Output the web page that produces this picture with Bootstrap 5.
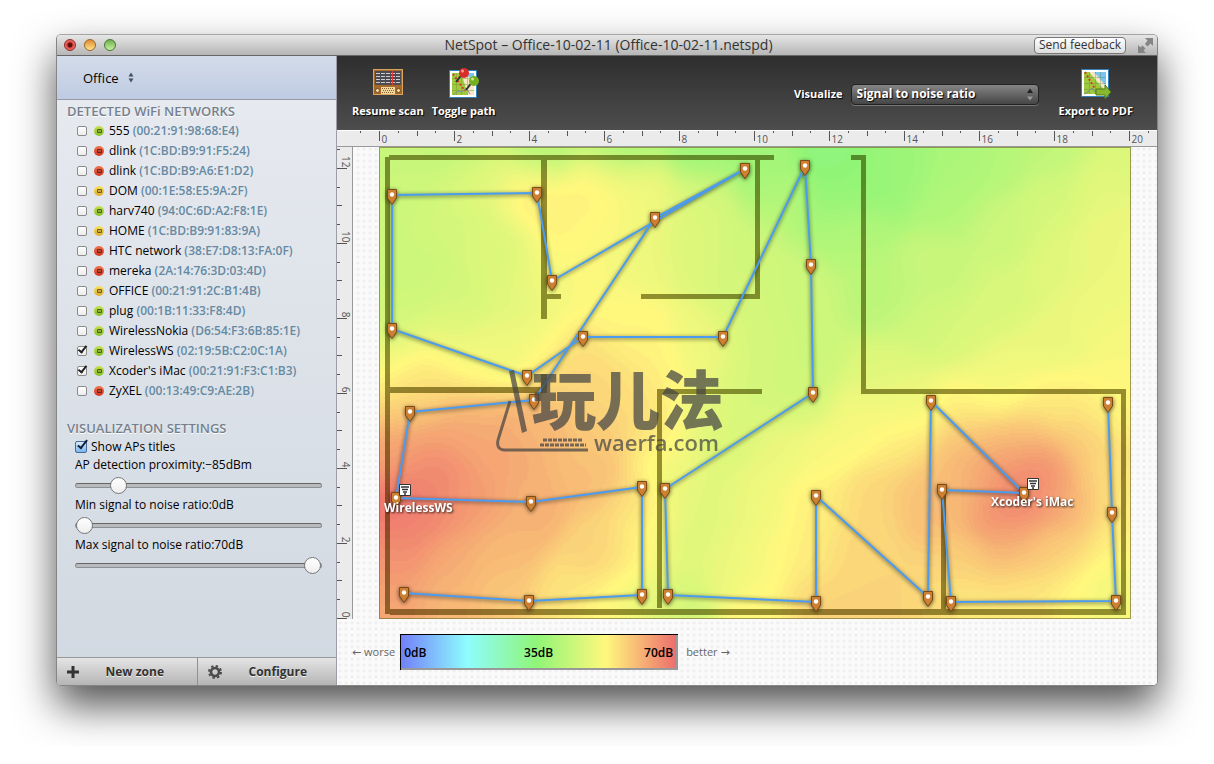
<!DOCTYPE html>
<html lang="en">
<head>
<meta charset="utf-8">
<meta name="viewport" content="width=device-width, initial-scale=1">
<title>NetSpot - Office-10-02-11</title>
<link href="https://cdn.jsdelivr.net/npm/bootstrap@5.3.0/dist/css/bootstrap.min.css" rel="stylesheet">
<style>
body{font-family:"Open Sans","Noto Sans",sans-serif;font-size:12px;line-height:20px;color:#000;background:#fff;padding:34px 56px 60px}
button,select,input{font:inherit}
.app-window{border:1px solid #858585;border-top-color:#a5a5a5;border-radius:5px;overflow:hidden;background:#fafafa;box-shadow:0 20px 40px rgba(0,0,0,.68)}
.title-bar{height:21px;background:linear-gradient(#e6e6e6,#b6b6b6);border-bottom:1px solid #666;padding:0 4px 0 7px;color:#333}
.title-side{flex:1}
.light{width:12px;height:12px;border-radius:50%;border:1px solid #555}
.light.red{background:radial-gradient(circle at 50% 50%,#5e0d0d 0 2px,#e04944 3px,#f4938a);border-color:#8c2b2b}
.light.amber{background:linear-gradient(#e08b2f,#ffe58b);border-color:#98672a}
.light.lime{background:linear-gradient(#6fae4c,#c6f2a0);border-color:#49763a}
.win-title{font-size:14px}
.feedback{height:17px;line-height:14px;padding:0 4px;border:1px solid #777;border-radius:4px;background:linear-gradient(#fff,#ddd);color:#333}
.side{width:280px;background:linear-gradient(#e8ebf0,#d0d8e1);border-right:1px solid #9b9fa5}
.zone-head{height:44px;background:linear-gradient(#d4dce9,#becbe3);border-bottom:1px solid #959ba5;padding-left:26px}
.zone-head button,.plain{background:none;border:0;padding:0}
.zone-head button{font-size:13px}
.side-label{font-size:13px;font-weight:600;color:#75808d;line-height:20px;margin:0 0 0 10px;padding-top:1px;text-shadow:0 1px #fff}
.net-list{margin-bottom:16px}
.net-row{height:20px;margin-left:20px;white-space:nowrap}
.net-row label{font-size:12px}
.mac{font-size:12px;font-weight:600;color:#668aa3}
.tick{appearance:none;width:10px;height:10px;border:1px solid #8b8b8b;border-radius:2px;background:linear-gradient(#fff,#ececec);margin:0;flex:none;position:relative}
.tick:checked::after{content:"";position:absolute;left:2px;top:-3px;width:5px;height:9px;border:solid #222;border-width:0 2px 2px 0;transform:rotate(38deg)}
.tick.blue{width:12px;height:12px;background:linear-gradient(#d9ecfc,#78b5ee);border-color:#49679b}
.tick.blue:checked::after{left:4px;top:-4px;width:5px;height:11px;border-color:#111d38}
.dot{width:10px;height:10px;margin:0 5px 0 7px;flex:none;border-radius:50%;display:flex;align-items:center;justify-content:center}
.dot::after{content:"";width:5px;height:4px;border:1px solid rgba(0,0,0,.45);background:rgba(0,0,0,.15);border-radius:1px}
.dot.g{background:linear-gradient(#c7e050,#82bf2b)}
.dot.r{background:linear-gradient(#f2754f,#cf3320)}
.dot.y{background:linear-gradient(#f7e45d,#dfa92f)}
.settings{padding:0 14px 0 18px}
.settings label{display:block}
.show-row{height:17px}
.slide{appearance:none;background:none;width:100%;height:20px;margin:0;display:block}
.slide::-webkit-slider-runnable-track{height:5px;border-radius:3px;background:#b8bbbe;border:1px solid #8c8f93;border-top-color:#666}
.slide::-webkit-slider-thumb{appearance:none;width:17px;height:17px;border-radius:50%;background:linear-gradient(#fff,#eee);border:1px solid #777;margin-top:-7px}
.side-foot{border-top:1px solid #999}
.side-foot button{height:27px;border:0;background:linear-gradient(#e4e4e4,#b5b5b5);font-weight:700;font-size:12px;color:#333;text-shadow:0 1px #eee;padding:0 10px}
.side-foot button+button{border-left:1px solid #909090}
.tools{height:74px;background:linear-gradient(#2e2e2e,#4d4d4d);padding:10px 24px 8px 15px;color:#fff;font-size:11px;font-weight:700;text-shadow:1px 1px 1px #000}
.tools .plain{color:#fff;font-weight:700;text-shadow:1px 1px 1px #000}
.tools svg{display:block;margin:0 auto 2px}
.tools .path-btn{margin-left:8px}
.tools .pdf-btn{margin-left:20px}
.picker{width:188px}
.picker select{appearance:none;width:100%;height:21px;line-height:16px;border:1px solid #222;border-radius:4px;background:linear-gradient(#858585,#454545);color:#fff;font-size:12px;font-weight:700;padding:0 5px;text-shadow:1px 1px 1px #000;box-shadow:0 1px #777;display:block}
.picker svg{position:absolute;right:5px;top:4px;margin:0;pointer-events:none}
.paper{min-width:0;background:#fafafa radial-gradient(circle,#efefef 1px,transparent 2px) 0 0/6px 6px}
.ruler{display:block;background:#ebebeb}
.ruler text{font-size:10px;fill:#555}
.ruler path{stroke:#555;fill:none}
.ruler-top{width:100%;border-bottom:1px solid #999;border-top:1px solid #fff}
.ruler-left{width:16px;height:100%;border-right:1px solid #999}
.board{display:grid;grid-template-columns:16px 1fr}
.stage{padding:0 26px}
.heat{position:relative;aspect-ratio:752/472;isolation:isolate}
.heat>*{position:absolute;left:0;top:0;width:100%;height:100%}
.walls{mix-blend-mode:multiply}
.ap{font-size:12px;font-weight:700;fill:#fff;filter:drop-shadow(1px 1px 1px rgba(0,0,0,.8))}
.brand-cjk{font:900 64px "Noto Sans CJK SC",sans-serif}
.brand-web{font:600 22px "Open Sans",sans-serif}
.legend-row{padding:15px 0 15px 15px;color:#666;font-size:11px}
.legend-row .arrow{font-family:"DejaVu Sans",sans-serif}
.ramp{width:278px;height:36px;margin:0 4px 0 5px;border:solid #000;border-width:1px 0 0 1px;box-shadow:inset -2px -2px #999;padding:0 5px 0 3px;background:linear-gradient(90deg,#7280f9,#8efdfd 24%,#90f577 49%,#fff87d 74%,#ee706d 99%);color:#000;font-size:12px;font-weight:600}
</style>
</head>
<body>
<div class="app-window">
  <header class="title-bar d-flex align-items-center">
    <div class="title-side d-flex gap-2"><span class="light red"></span><span class="light amber"></span><span class="light lime"></span></div>
    <div class="win-title">NetSpot – Office-10-02-11 (Office-10-02-11.netspd)</div>
    <div class="title-side d-flex justify-content-end align-items-center gap-2">
      <button class="feedback">Send feedback</button>
      <svg class="ms-1" width="15" height="15" viewBox="0 0 15 15" fill="#858585"><path d="M7 0h8v8l-2.500-2.500-3 3L7 6l2.500-3.500zM8 15H0V7l2.500 2.500 2-2L7.500 10.500 5.500 12.500z"/></svg>
    </div>
  </header>
  <div class="d-flex">
    <aside class="side d-flex flex-column flex-shrink-0">
      <div class="zone-head d-flex align-items-center"><button class="d-flex align-items-center">Office
        <svg class="ms-2" width="8" height="11" viewBox="0 0 8 11" fill="#444f63"><path d="M1.500 4.500 4 .500l2.500 4zM1.500 6.500 4 10.500l2.500-4z"/></svg></button></div>
      <h2 class="side-label">DETECTED WiFi NETWORKS</h2>
      <div class="net-list" id="nets"></div>
      <h2 class="side-label">VISUALIZATION SETTINGS</h2>
      <div class="settings">
        <div class="show-row d-flex align-items-center"><input class="tick blue" type="checkbox" id="titles" checked><label class="ms-1" for="titles">Show APs titles</label></div>
        <label for="prox">AP detection proximity:−85dBm</label>
        <input class="slide" type="range" id="prox" min="-100" max="0" value="-85">
        <label for="mins">Min signal to noise ratio:0dB</label>
        <input class="slide" type="range" id="mins" min="0" max="70" value="0">
        <label for="maxs">Max signal to noise ratio:70dB</label>
        <input class="slide" type="range" id="maxs" min="0" max="70" value="70">
      </div>
      <div class="side-foot d-flex mt-auto">
        <button class="w-50 d-flex align-items-center"><svg width="12" height="12" viewBox="0 0 12 12" fill="#333"><path d="M4.500 0h3v4.500H12v3H7.500V12h-3V7.500H0v-3h4.500z"/></svg><span class="flex-fill ps-1">New zone</span></button>
        <button class="w-50 d-flex align-items-center"><svg width="14" height="14" viewBox="-7 -7 14 14"><circle r="4" fill="none" stroke="#4b4b4b" stroke-width="2.600"/><circle r="6" fill="none" stroke="#4b4b4b" stroke-width="2" stroke-dasharray="2.400 2.312"/></svg><span class="flex-fill ps-2">Configure</span></button>
      </div>
    </aside>
    <main class="flex-grow-1 paper">
      <div class="tools d-flex align-items-center">
        <button class="plain">
          <svg width="30" height="32" viewBox="0 0 30 32"><rect x="0" y="2" width="30" height="26" rx="1" fill="#a5692a"/><rect x=".500" y="2.500" width="29" height="25" fill="none" stroke="#dba55e"/><rect x="2" y="4" width="26" height="14" fill="#4b4b53"/><path d="M3 6.500h24M3 9.500h24M3 12.500h24M3 15.500h24" stroke="#ccc" stroke-dasharray="4 1"/><path d="M19.500 4v14" stroke="#e33"/><rect x="8" y="20" width="14" height="7" fill="#f1d99d"/><path d="M9 21.500h12M10 23.500h12M9 25.500h12" stroke="#876033" stroke-dasharray="1 1"/><g fill="#f3dfb0" stroke="#77461a"><circle cx="4.500" cy="23.500" r="2"/><circle cx="25.500" cy="23.500" r="2"/></g></svg>
          Resume scan</button>
        <button class="plain path-btn">
          <svg width="32" height="32" viewBox="0 0 32 32"><rect x="1.500" y="3.500" width="27" height="27" fill="#fff" stroke="#2f80bd"/><path d="M4 6h22v22H4z" fill="#9fca3e"/><path d="M13 6h13v22h-6l-3-10z" fill="#f6e7c5"/><path d="M17 6h9v9z" fill="#7cc4ef"/><path d="M8.500 6v22M13.500 6v22M19.500 6v22M4 11.500h22M4 17.500h22M4 23.500h22" stroke="#789b3b" opacity=".5"/><path d="m5 7 12 17" stroke="#dd3a2d" stroke-width="2" stroke-dasharray="2 2"/><path d="m5 28 5-4 4 1 4-4 4 6" fill="none" stroke="#8290a1"/><path d="m15 6-7 9M25 14l-7 9" stroke="#333" stroke-width="2"/><circle cx="16" cy="6" r="5" fill="#d82e2b"/><circle cx="14.500" cy="4" r="1.500" fill="#ff9d91"/><circle cx="26" cy="14" r="5" fill="#76ae22"/><circle cx="24.500" cy="12" r="1.500" fill="#c8eb85"/></svg>
          Toggle path</button>
        <div class="ms-auto d-flex align-items-center gap-2">
          <label for="vis">Visualize</label>
          <div class="picker position-relative"><select id="vis"><option>Signal to noise ratio</option></select>
            <svg width="8" height="13" viewBox="0 0 8 13"><path d="M1 5 4 .500 7 5z" fill="#222"/><path d="m1 8.500 3 4 3-4z" fill="#999"/></svg></div>
        </div>
        <button class="plain pdf-btn">
          <svg width="32" height="32" viewBox="0 0 32 32"><rect x="1.500" y="2.500" width="27" height="27" fill="#fff" stroke="#2f80bd"/><path d="M4 5h22v22H4z" fill="#9fca3e"/><path d="M9 5h6l11 12v8z" fill="#f6e7c5"/><path d="M14 5h12v14z" fill="#7cc4ef"/><path d="M9.500 5v22M15.500 5v22M20.500 5v22M4 10.500h22M4 16.500h22M4 22.500h22" stroke="#567f4b" opacity=".35"/><path d="m5 5 10 17" stroke="#dd3a2d" stroke-width="2" stroke-dasharray="2 2"/><path d="m4 27 4-2 4-4 4 5" fill="none" stroke="#788799"/><path d="M16 22h9v-4l6 7-6 7v-4h-9z" fill="#89b82f" stroke="#4c7c13"/></svg>
          Export to PDF</button>
      </div>
      <svg class="ruler ruler-top" id="rulerX" viewBox="0 0 820 15"></svg>
      <div class="board">
        <svg class="ruler ruler-left" id="rulerY" viewBox="0 0 15 472" preserveAspectRatio="xMinYMin meet"></svg>
        <div class="stage">
          <div class="heat">
            <canvas id="heat" width="752" height="472"></canvas>
            <svg class="walls" viewBox="379 147 752 472"><path fill="#96925a" d="M389 155h385v5H389zM385 157h5v457h-5zM390 609h736v6H390zM541 160h6v159h-6zM547 294h14v5h-14zM641 294h114v5H641zM755 160h5v139h-5zM851 155h15v5h-15zM861 160h5v234h-5zM866 389h260v5H866zM1121 394h5v215h-5zM941 490h5v119h-5zM390 387h157v6H390zM541 374h6v13h-6zM657 389h105v5H657zM657 394h5v214h-5z"/></svg>
            <svg viewBox="379 147 752 472">
              <rect x="379.500" y="147.500" width="751" height="471" fill="none" stroke="#7c7434" stroke-opacity=".7"/>
              <g style="filter:drop-shadow(0 1px 2px rgba(0,0,0,.65))"><g id="route" fill="none" stroke="#4b9bf0" stroke-width="2" stroke-linejoin="round"></g><g id="pins"></g></g>
              <g fill="#fff" stroke="#333" stroke-width="1"><path d="M399.500 484.500h11v11h-11z"/><path d="M1027.500 478.500h11v11h-11z"/><path d="M401 487h8M402 489.500h6M403 492h4M405 493v2M1029 481h8M1030 483.500h6M1031 486h4M1033 487v2" stroke-width="1.500"/></g>
              <text class="ap" x="384" y="512">WirelessWS</text>
              <text class="ap" x="991" y="506">Xcoder's iMac</text>
              <g opacity=".72" fill="#444" stroke="none">
                <path d="m509 371 5-1 13 61-5 2z"/>
                <path d="m510 401-12 39q-2 10 7 10h83" fill="none" stroke="#444" stroke-width="3"/>
                <path d="M543 440h40M540 445h46" stroke="#444" stroke-width="3" stroke-dasharray="4 1"/>
                <text class="brand-cjk" x="532" y="424">玩儿法</text>
                <text class="brand-web" x="594" y="451">waerfa.com</text>
              </g>
            </svg>
          </div>
        </div>
      </div>
      <div class="legend-row d-flex align-items-center">
        <span><span class="arrow">←</span> worse</span>
        <div class="ramp d-flex align-items-center"><span class="col">0dB</span><span>35dB</span><span class="col text-end">70dB</span></div>
        <span class="ms-1">better <span class="arrow">→</span></span>
      </div>
    </main>
  </div>
</div>
<script>
// Detected networks: status colour, name, address, ticked
const nets=[['g','555','00:21:91:98:68:E4'],['r','dlink','1C:BD:B9:91:F5:24'],['r','dlink','1C:BD:B9:A6:E1:D2'],['y','DOM','00:1E:58:E5:9A:2F'],['g','harv740','94:0C:6D:A2:F8:1E'],['y','HOME','1C:BD:B9:91:83:9A'],['r','HTC network','38:E7:D8:13:FA:0F'],['r','mereka','2A:14:76:3D:03:4D'],['y','OFFICE','00:21:91:2C:B1:4B'],['g','plug','00:1B:11:33:F8:4D'],['g','WirelessNokia','D6:54:F3:6B:85:1E'],['g','WirelessWS','02:19:5B:C2:0C:1A',1],["g","Xcoder's iMac",'00:21:91:F3:C1:B3',1],['r','ZyXEL','00:13:49:C9:AE:2B']];
document.getElementById('nets').innerHTML=nets.map((n,i)=>`<div class="net-row d-flex align-items-center"><input class="tick" type="checkbox" id="n${i}" ${n[3]?'checked':''}><span class="dot ${n[0]}"></span><label for="n${i}">${n[1]} <span class="mac">(${n[2]})</span></label></div>`).join('');
// Rulers, four ticks for every two metres
let tx='',lx='',ty='',ly='';
for(let i=-1;i<=41;i++){const x=Math.round(42+i*18.75)+.5,l=i%4?(i%2?2:5):10;tx+=`M${x} 0v${l}`;if(i%4===0)lx+=`<text x="${x+2}" y="12">${i/2}</text>`}
for(let i=0;i<=25;i++){const y=471.5-Math.round(i*18.75),l=i%4?(i%2?3:5):10;ty+=`M0 ${y}h${l}`;if(i%4===0)ly+=`<text transform="translate(5 ${y-1}) rotate(90)" text-anchor="end">${i/2}</text>`}
rulerX.innerHTML=`<path d="${tx}"/>`+lx;
rulerY.innerHTML=`<path d="${ty}"/>`+ly;
// Survey route and its stops
const routes=[[[745,169],[552,281],[537,193],[392,195],[392,329],[527,376],[583,337],[723,337],[805,166],[811,265],[813,393],[665,489],[668,595],[816,602],[816,496],[928,597],[931,401],[1024,493],[942,490],[951,602],[1116,601],[1112,513],[1108,403]],
[[745,169],[655,218],[534,400],[410,412],[396,498],[531,502],[642,487],[642,595],[529,601],[404,593]]];
route.innerHTML=routes.map(r=>`<polyline points="${r.join(' ')}"/>`).join('');
pins.innerHTML=routes.flat().filter(p=>p[0]!==0).map(([x,y])=>`<g transform="translate(${x} ${y})"><path d="M-4.500-5.500h9V3L0 9.500-4.500 3z" fill="#cd7f32" stroke="#7c4a14"/><circle cy="-.500" r="2.200" fill="#fff"/></g>`).join('');
// Signal samples: x, y, share of the scale in percent
const s=[385,150,62,460,150,60,545,150,56,620,150,54,700,150,52,760,165,53,830,165,47,960,150,55,1060,150,60,1125,150,66,400,200,63,420,270,63,395,330,64,460,300,65,500,250,67,450,340,68,480,180,69,450,220,65,536,190,78,590,190,77,560,230,76,520,300,68,552,280,73,590,290,74,600,240,74,650,200,71,620,190,74,640,260,71,700,200,66,745,250,64,740,300,65,690,250,67,620,320,75,640,345,76,700,340,71,760,340,65,580,350,80,560,375,82,490,350,71,540,340,72,470,370,74,430,370,77,400,374,77,380,370,70,430,386,82,
800,300,63,800,400,64,810,350,63,850,230,58,880,300,59,780,200,58,840,200,51,860,180,50,900,170,52,950,200,57,1000,230,63,1050,200,65,1100,180,69,1000,160,58,1000,300,66,1060,260,68,1100,300,71,960,340,66,1050,340,70,1120,340,73,1100,240,70,880,370,67,920,330,64,1125,380,74,1125,250,71,1000,370,71,900,385,69,940,270,62,
400,410,86,382,400,80,382,450,90,400,450,92,395,500,100,430,470,96,400,540,96,430,510,96,390,610,90,390,570,92,470,500,92,500,450,90,450,430,91,470,410,88,530,500,88,540,430,87,590,470,86,600,430,83,640,500,81,600,550,82,640,560,77,630,600,74,560,600,79,500,550,87,500,590,84,450,600,87,450,560,89,655,600,68,600,617,75,655,530,75,
655,440,79,640,400,80,610,380,81,660,380,76,700,400,70,740,400,65,720,440,66,670,460,71,680,490,68,670,600,63,680,540,65,720,500,68,720,560,70,760,560,73,760,500,72,780,450,70,820,450,74,860,420,73,815,500,77,800,560,77,816,600,82,860,560,81,870,500,81,920,490,85,940,495,86,900,450,78,900,410,74,880,600,82,930,600,81,760,610,75,
1020,490,97,1000,515,95,1040,470,95,990,470,92,1060,500,91,960,490,87,970,440,85,1020,435,86,1080,440,83,1010,550,87,1090,500,85,1060,550,83,960,560,83,960,600,77,1020,590,78,1080,590,75,1110,590,71,1115,540,76,1110,480,79,1110,410,76,1050,400,77,960,400,76,1000,390,74,1125,500,75,1125,615,74];
const stops=[[0,114,128,249],[.24,142,253,253],[.49,144,245,119],[.75,255,248,125],[1,238,112,109]];
const ramp=t=>{let i=1;while(i<4&&t>stops[i][0])i++;const a=stops[i-1],b=stops[i],k=(t-a[0])/(b[0]-a[0]);return [1,2,3].map(j=>a[j]+(b[j]-a[j])*k)};
const c=document.getElementById('heat'),g=c.getContext('2d'),im=g.createImageData(752,472);
for(let y=0;y<472;y+=2)for(let x=0;x<752;x+=2){let n=0,d=0;for(let i=0;i<s.length;i+=3){const q=(s[i]-379-x)**2+(s[i+1]-147-y)**2,w=Math.exp(-q/900)+.02*Math.exp(-q/2800)+1e-7;n+=w*s[i+2];d+=w}
const col=ramp(Math.min(1,Math.round(n/d)*.01));for(let a=0;a<2;a++)for(let b=0;b<2;b++){const p=((y+a)*752+x+b)*4;im.data[p]=col[0];im.data[p+1]=col[1];im.data[p+2]=col[2];im.data[p+3]=255}}
g.putImageData(im,0,0);
</script>
<script src="https://cdn.jsdelivr.net/npm/bootstrap@5.3.0/dist/js/bootstrap.bundle.min.js"></script>
</body>
</html>
